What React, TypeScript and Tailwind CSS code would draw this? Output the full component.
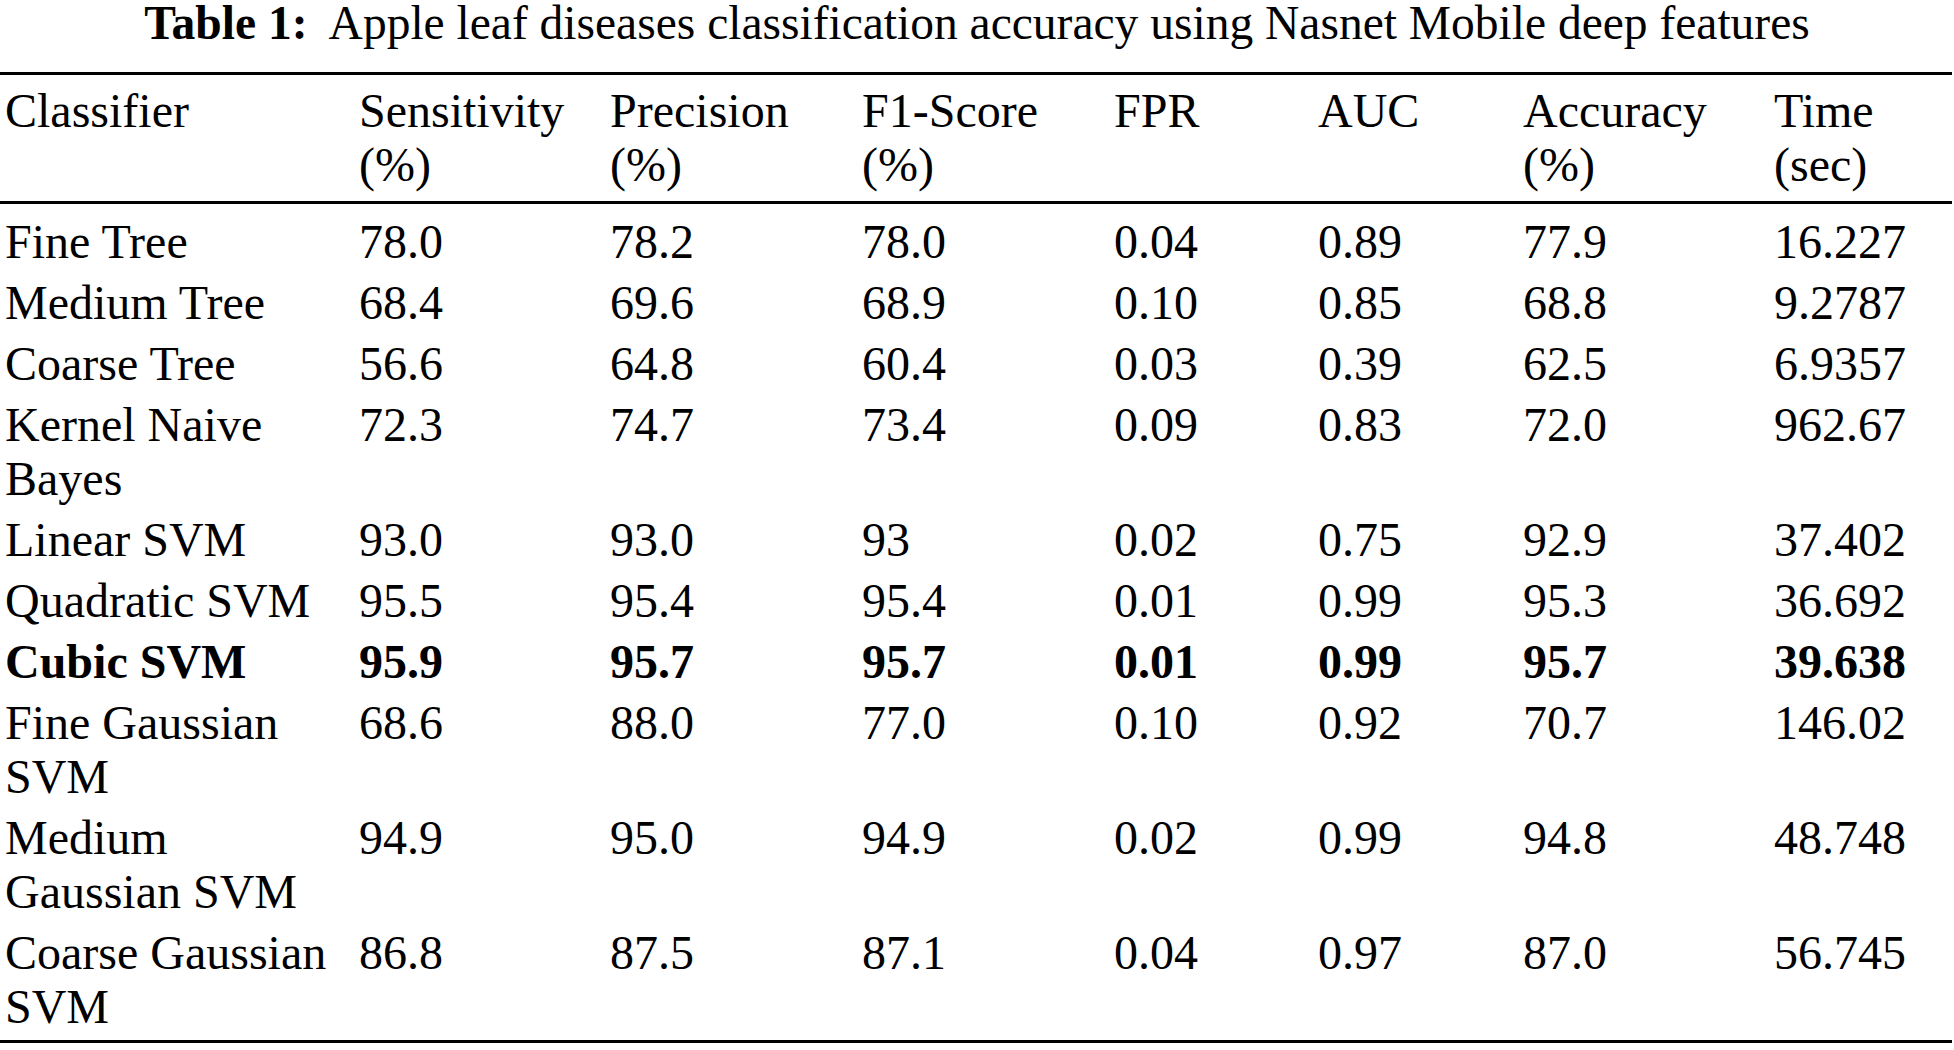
import React from 'react';

type Row = {
  name: React.ReactNode;
  vals: string[];
  bold?: boolean;
};

const rows: Row[] = [
  { name: 'Fine Tree', vals: ['78.0', '78.2', '78.0', '0.04', '0.89', '77.9', '16.227'] },
  { name: 'Medium Tree', vals: ['68.4', '69.6', '68.9', '0.10', '0.85', '68.8', '9.2787'] },
  { name: 'Coarse Tree', vals: ['56.6', '64.8', '60.4', '0.03', '0.39', '62.5', '6.9357'] },
  { name: <>Kernel Naive<br />Bayes</>, vals: ['72.3', '74.7', '73.4', '0.09', '0.83', '72.0', '962.67'] },
  { name: 'Linear SVM', vals: ['93.0', '93.0', '93', '0.02', '0.75', '92.9', '37.402'] },
  { name: 'Quadratic SVM', vals: ['95.5', '95.4', '95.4', '0.01', '0.99', '95.3', '36.692'] },
  { name: 'Cubic SVM', vals: ['95.9', '95.7', '95.7', '0.01', '0.99', '95.7', '39.638'], bold: true },
  { name: <>Fine Gaussian<br />SVM</>, vals: ['68.6', '88.0', '77.0', '0.10', '0.92', '70.7', '146.02'] },
  { name: <>Medium<br />Gaussian SVM</>, vals: ['94.9', '95.0', '94.9', '0.02', '0.99', '94.8', '48.748'] },
  { name: <>Coarse Gaussian<br />SVM</>, vals: ['86.8', '87.5', '87.1', '0.04', '0.97', '87.0', '56.745'] },
];

const headers: React.ReactNode[] = [
  'Classifier',
  <>Sensitivity<br />(%)</>,
  <>Precision<br />(%)</>,
  <>F1-Score<br />(%)</>,
  'FPR',
  'AUC',
  <>Accuracy<br />(%)</>,
  <>Time<br />(sec)</>,
];

// column tracks measured off the reference
const grid = 'grid grid-cols-[354px_251px_252px_252px_204px_205px_251px_1fr] pl-[5px]';

export default function App() {
  return (
    <div className="w-[1954px] h-[1050px] bg-white text-black font-['Liberation_Serif',serif] text-[48px] leading-[54px]">
      <h1 className="text-center text-[47.5px] leading-[47px] whitespace-pre">
        <span className="font-bold">Table 1:</span>{'  '}Apple leaf diseases classification accuracy using Nasnet Mobile deep features
      </h1>

      <div className="mt-[25px] mr-[2px] border-t-[3px] border-b-[3px] border-black">
        <div className={`${grid} pt-[9px] pb-[9px] border-b-[3px] border-black`}>
          {headers.map((h, i) => (
            <div key={i}>{h}</div>
          ))}
        </div>

        <div className="pt-[7px] pb-[3px]">
          {rows.map((r, i) => (
            <div key={i} className={`${grid} pt-[4px] pb-[3px] ${r.bold ? 'font-bold' : ''}`}>
              <div>{r.name}</div>
              {r.vals.map((v, j) => (
                <div key={j}>{v}</div>
              ))}
            </div>
          ))}
        </div>
      </div>
    </div>
  );
}
